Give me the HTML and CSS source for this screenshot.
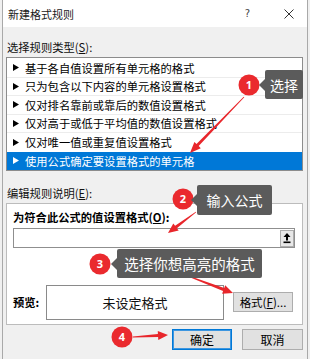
FILE: index.html
```html
<!DOCTYPE html>
<html>
<head>
<meta charset="utf-8">
<link rel="stylesheet" href="styles.css">
</head>
<body>
<div class="dlg">
  <div class="titlebar">
    <span class="title">新建格式规则</span>
    <span class="help">?</span>
    <svg class="close" width="10" height="10" viewBox="0 0 10 10"><path d="M0.5 0.5 L9.5 9.5 M9.5 0.5 L0.5 9.5" stroke="#333" stroke-width="1"/></svg>
  </div>
  <div class="content">
    <div class="label">选择规则类型(<u>S</u>):</div>
    <div class="list">
      <div class="row"><svg class="tri" width="6" height="7" viewBox="0 0 6 7"><polygon points="0,0 6,3.5 0,7"/></svg><span>基于各自值设置所有单元格的格式</span></div>
      <div class="row"><svg class="tri" width="6" height="7" viewBox="0 0 6 7"><polygon points="0,0 6,3.5 0,7"/></svg><span>只为包含以下内容的单元格设置格式</span></div>
      <div class="row"><svg class="tri" width="6" height="7" viewBox="0 0 6 7"><polygon points="0,0 6,3.5 0,7"/></svg><span>仅对排名靠前或靠后的数值设置格式</span></div>
      <div class="row"><svg class="tri" width="6" height="7" viewBox="0 0 6 7"><polygon points="0,0 6,3.5 0,7"/></svg><span>仅对高于或低于平均值的数值设置格式</span></div>
      <div class="row"><svg class="tri" width="6" height="7" viewBox="0 0 6 7"><polygon points="0,0 6,3.5 0,7"/></svg><span>仅对唯一值或重复值设置格式</span></div>
      <div class="row sel"><svg class="tri" width="6" height="7" viewBox="0 0 6 7"><polygon points="0,0 6,3.5 0,7"/></svg><span>使用公式确定要设置格式的单元格</span></div>
    </div>
    <div class="label label2">编辑规则说明(<u>E</u>):</div>
    <div class="panel">
      <div class="bold">为符合此公式的值设置格式(<u>O</u>):</div>
      <div class="input">
        <div class="ibtn"><svg width="12" height="14" viewBox="0 0 12 14"><polygon points="2.5,6 6,2 9.5,6" fill="#000"/><rect x="5" y="6" width="2" height="3.5" fill="#000"/><rect x="2.5" y="10.5" width="7" height="1.6" fill="#000"/></svg></div>
      </div>
      <div class="prev">
        <span class="plabel">预览:</span>
        <div class="pbox">未设定格式</div>
        <div class="btn fbtn">格式(<u>F</u>)...</div>
      </div>
    </div>
    <div class="actions">
      <div class="btn ok">确定</div>
      <div class="btn cancel">取消</div>
    </div>
  </div>
</div>

<svg class="overlay" width="310" height="359" viewBox="0 0 310 359">
  <g class="arrows">
    <polygon points="244.3,97.3 198.7,146.1 200.8,148.2 190,153 194.4,142.0 196.5,144.1 243.7,96.7"/>
    <polygon points="196.2,212.3 176.9,228.2 178.7,230.6 168,233 173.3,223.4 175.1,225.8 195.8,211.7"/>
    <polygon points="187.9,276.4 223.1,290.9 222.1,293.7 233,293 225.2,285.3 224.2,288.1 188.1,275.6"/>
    <polygon points="133,337.4 158.1,337.1 158.3,340.1 168,335 157.8,331.1 157.9,334.1 133,336.6"/>
  </g>
  <circle cx="249" cy="85" r="10.5" fill="#ea2a2e"/>
  <circle cx="183" cy="199" r="10.5" fill="#ea2a2e"/>
  <circle cx="100" cy="264" r="10.5" fill="#ea2a2e"/>
  <circle cx="122" cy="337" r="10.5" fill="#ea2a2e"/>
  <text class="num" x="249" y="89">1</text>
  <text class="num" x="183" y="203">2</text>
  <text class="num" x="100" y="268">3</text>
  <text class="num" x="122" y="341">4</text>
</svg>
<div class="callout c1">选择</div>
<div class="callout c2">输入公式</div>
<div class="callout c3">选择你想高亮的格式</div>
</body>
</html>
```
FILE: styles.css
```css
* { box-sizing: border-box; }
html, body { margin: 0; padding: 0; }
body {
  width: 310px;
  height: 359px;
  overflow: hidden;
  position: relative;
  background: #f0f0f0;
  font-family: "Noto Sans CJK SC", "Noto Sans", sans-serif;
  font-size: 11.3px;
  color: #000;
}
u { text-decoration: underline; text-underline-offset: 1px; }
.dlg {
  margin-left: 2px;
  width: 306px;
  height: 359px;
  border-left: 1px solid #a9a9a9;
  border-right: 1px solid #a9a9a9;
  display: flex;
  flex-direction: column;
}
.titlebar {
  height: 27px;
  background: #fff;
  display: flex;
  align-items: center;
  padding-left: 5px;
  padding-right: 13px;
  flex-shrink: 0;
}
.title { flex: 1; font-size: 11px; line-height: 14px; color: #1a1a1a; }
.help { font-family: "DejaVu Sans", sans-serif; font-size: 10px; color: #444; margin-right: 34px; }
.close { display: block; }
.content {
  flex: 1;
  background: #f0f0f0;
  padding: 0 4px 0 3px;
}
.label {
  padding-top: 10px;
  height: 30px;
  line-height: 20px;
  padding-left: 1px;
  color: #111;
}
.label2 { padding-top: 12px; height: 32px; }
.list {
  background: #fff;
  border: 1px solid #8c8c8c;
  padding: 1px 0 0 0;
  height: 114px;
}
.row {
  height: 18.5px;
  display: flex;
  align-items: center;
  padding-left: 6px;
  border-bottom: 1px solid #ececec;
  line-height: 18px;
  white-space: nowrap;
  overflow: hidden;
}
.row:nth-child(5) { border-bottom: none; }
.row .tri { flex-shrink: 0; margin-right: 6px; fill: #000; }
.row.sel { background: #0078d7; color: #fff; border-bottom: none; }
.row.sel .tri { fill: #fff; }
.panel {
  background: #fff;
  border: 1px solid #bcbcbc;
  padding: 5px 7px 4px 6px;
}
.bold { font-weight: bold; line-height: 16px; height: 16px; }
.input {
  margin-top: 3px;
  height: 20px;
  border: 1px solid #8f8f8f;
  background: #fff;
  display: flex;
  justify-content: flex-end;
  align-items: center;
}
.ibtn {
  width: 14px;
  height: 17px;
  border: 1px solid #adadad;
  background: #e8e8e8;
  display: flex;
  align-items: center;
  justify-content: center;
}
.ibtn svg { display: block; }
.prev {
  margin-top: 36px;
  height: 36px;
  display: flex;
  align-items: center;
}
.plabel { width: 33px; font-weight: bold; }
.pbox {
  width: 178px;
  height: 35px;
  border: 1px solid #8a8a8a;
  background: #fff;
  display: flex;
  align-items: center;
  justify-content: center;
  font-size: 13px;
  color: #111;
}
.btn {
  height: 20px;
  border: 1px solid #adadad;
  background: #e1e1e1;
  display: flex;
  align-items: center;
  justify-content: center;
  font-size: 11.5px;
  color: #000;
}
.fbtn { width: 60px; margin-left: 9px; }
.actions {
  margin-top: 4px;
  display: flex;
  justify-content: flex-end;
  gap: 10px;
}
.actions .btn { height: 21px; font-size: 12px; }
.ok { width: 60px; border-color: #0078d7; box-shadow: inset 0 0 0 1px #3d96e0; }
.cancel { width: 61px; }
.overlay {
  position: absolute;
  left: 0;
  top: 0;
  pointer-events: none;
}
.arrows polygon { fill: #e8262b; }
.num {
  font-family: "Noto Sans", sans-serif;
  font-size: 11px;
  font-weight: bold;
  fill: #fff;
  text-anchor: middle;
}
.callout {
  position: absolute;
  background: #5b5b5b;
  color: #fff;
  border-radius: 2px;
  display: flex;
  align-items: center;
  justify-content: center;
  white-space: nowrap;
  font-size: 14px;
}
.callout::before {
  content: "";
  position: absolute;
  left: -6px;
  top: 50%;
  margin-top: -6px;
  border-top: 6px solid transparent;
  border-bottom: 6px solid transparent;
  border-right: 6px solid #5b5b5b;
}
.c1 { left: 265px; top: 70px; width: 38px; height: 29px; }
.c2 { left: 197px; top: 185px; width: 75px; height: 30px; }
.c3 { left: 117px; top: 249px; width: 145px; height: 29px; font-size: 14.5px; }
```
